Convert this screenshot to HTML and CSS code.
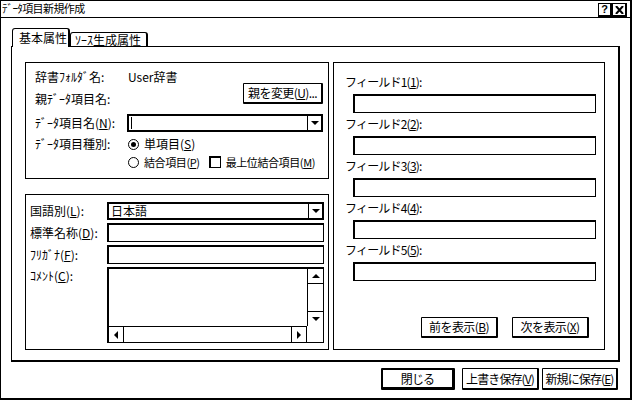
FILE: index.html
```html
<!DOCTYPE html>
<html lang="ja">
<head>
    <meta charset="UTF-8">
    <title>ﾃﾞｰﾀ項目新規作成</title>
    <link rel="stylesheet" href="styles.css">
</head>
<body>
    <div class="window">
        <div class="titlebar">
            <span class="title">ﾃﾞｰﾀ項目新規作成</span>
            <div class="caption-btns">
                <span class="cap-btn">?</span>
                <span class="cap-btn">
                    <svg width="9" height="8" viewBox="0 0 9 8"><path d="M1 0 L8 8 M8 0 L1 8" stroke="#000" stroke-width="2" fill="none"/></svg>
                </span>
            </div>
        </div>

        <div class="body">
            <div class="tabs">
                <div class="tab active">基本属性</div>
                <div class="tab">ｿｰｽ生成属性</div>
            </div>

            <div class="tab-panel">
                <div class="left-col">
                    <!-- 項目 -->
                    <div class="group group-item">
                        <div class="row r1">
                            <span class="label">辞書ﾌｫﾙﾀﾞ名:</span>
                            <span class="value">User辞書</span>
                        </div>
                        <div class="row r2">
                            <span class="label">親ﾃﾞｰﾀ項目名:</span>
                            <button class="btn btn-parent">親を変更(<u>U</u>)...</button>
                        </div>
                        <div class="row r3">
                            <span class="label">ﾃﾞｰﾀ項目名(<u>N</u>):</span>
                            <div class="combo combo-name">
                                <div class="combo-text"><span class="caret"></span></div>
                                <div class="combo-drop"><span class="tri-down"></span></div>
                            </div>
                        </div>
                        <div class="row r4">
                            <span class="label">ﾃﾞｰﾀ項目種別:</span>
                            <span class="radio checked"></span>
                            <span class="opt">単項目(<u>S</u>)</span>
                        </div>
                        <div class="row r5">
                            <span class="label"></span>
                            <span class="radio"></span>
                            <span class="opt">結合項目(<u>P</u>)</span>
                            <span class="check"></span>
                            <span class="opt">最上位結合項目(<u>M</u>)</span>
                        </div>
                    </div>

                    <!-- 国語 -->
                    <div class="group group-lang">
                        <div class="lrow">
                            <span class="label2">国語別(<u>L</u>):</span>
                            <div class="combo combo-lang">
                                <div class="combo-text">日本語</div>
                                <div class="combo-drop"><span class="tri-down"></span></div>
                            </div>
                        </div>
                        <div class="lrow">
                            <span class="label2">標準名称(<u>D</u>):</span>
                            <div class="edit"></div>
                        </div>
                        <div class="lrow">
                            <span class="label2">ﾌﾘｶﾞﾅ(<u>F</u>):</span>
                            <div class="edit"></div>
                        </div>
                        <div class="lrow lrow-memo">
                            <span class="label2">ｺﾒﾝﾄ(<u>C</u>):</span>
                            <div class="memo">
                                <div class="memo-text"></div>
                                <div class="vscroll">
                                    <span class="sb-btn"><span class="tri-up"></span></span>
                                    <span class="sb-track"></span>
                                    <span class="sb-btn sb-end"><span class="tri-down"></span></span>
                                </div>
                                <div class="hscroll">
                                    <span class="sb-btn"><span class="tri-left"></span></span>
                                    <span class="sb-track"></span>
                                    <span class="sb-btn sb-end"><span class="tri-right"></span></span>
                                </div>
                                <div class="sb-corner"></div>
                            </div>
                        </div>
                    </div>
                </div>

                <!-- フィールド -->
                <div class="group group-fields">
                    <div class="field-label">フィールド1(<u>1</u>):</div>
                    <div class="edit field-edit"></div>
                    <div class="field-label">フィールド2(<u>2</u>):</div>
                    <div class="edit field-edit"></div>
                    <div class="field-label">フィールド3(<u>3</u>):</div>
                    <div class="edit field-edit"></div>
                    <div class="field-label">フィールド4(<u>4</u>):</div>
                    <div class="edit field-edit"></div>
                    <div class="field-label">フィールド5(<u>5</u>):</div>
                    <div class="edit field-edit"></div>
                    <div class="page-btns">
                        <button class="btn btn-page">前を表示(<u>B</u>)</button>
                        <button class="btn btn-page">次を表示(<u>X</u>)</button>
                    </div>
                </div>
            </div>

            <div class="footer">
                <button class="btn btn-default btn-close">閉じる</button>
                <button class="btn btn-save">上書き保存(<u>V</u>)</button>
                <button class="btn btn-new">新規に保存(<u>E</u>)</button>
            </div>
        </div>
    </div>
</body>
</html>
```

FILE: styles.css
```css
* {
    box-sizing: border-box;
}
body {
    margin: 0;
    background: #fff;
    color: #000;
    font-family: "Noto Sans CJK JP", "Liberation Sans", sans-serif;
    font-size: 12px;
    line-height: 14px;
    white-space: nowrap;
}
u {
    text-underline-offset: 1px;
}
.window {
    width: 632px;
    height: 400px;
    border: 1px solid #000;
    border-right-width: 2px;
    border-bottom-width: 2px;
    display: flex;
    flex-direction: column;
}

/* titlebar */
.titlebar {
    height: 17px;
    border-bottom: 1px solid #000;
    display: flex;
    align-items: flex-start;
    justify-content: space-between;
}
.title {
    font-size: 11px;
    letter-spacing: -0.6px;
    line-height: 15px;
    padding-left: 1px;
}
.caption-btns {
    display: flex;
    margin-top: 2px;
    margin-right: 3px;
}
.cap-btn {
    width: 14px;
    height: 14px;
    border: 1px solid #000;
    border-right-width: 2px;
    border-bottom-width: 2px;
    font-family: "Liberation Sans", sans-serif;
    font-weight: bold;
    font-size: 11px;
    line-height: 11px;
    display: flex;
    align-items: center;
    justify-content: center;
}
.cap-btn + .cap-btn {
    width: 15px;
}

/* tabs */
.body {
    flex: 1;
    padding: 10px 10px 0 10px;
}
.tabs {
    display: flex;
    align-items: flex-end;
    height: 18px;
    padding-left: 1px;
}
.tab {
    height: 14px;
    width: 78px;
    padding: 0 0 0 4px;
    border: 1px solid #000;
    border-bottom: none;
    border-right-width: 2px;
    border-radius: 3px 3px 0 0;
    line-height: 13px;
    background: #fff;
}
.tab.active {
    height: 19px;
    width: 58px;
    margin-bottom: -1px;
    padding: 2px 0 0 6px;
    position: relative;
    z-index: 1;
}
.tab-panel {
    height: 316px;
    border: 1px solid #000;
    border-right-width: 2px;
    border-bottom-width: 2px;
    padding: 15px 13px 10px 13px;
    display: grid;
    grid-template-columns: 304px 272px;
    gap: 4px;
}
.left-col {
    display: flex;
    flex-direction: column;
    gap: 15px;
}
.group {
    border: 1px solid #000;
}

/* group 1 */
.group-item {
    height: 117px;
    padding: 5px 5px 0 9px;
}
.row {
    display: flex;
    align-items: center;
}
.r1 { height: 18px; }
.r2 { height: 26px; }
.r3 { height: 22px; }
.r4 { height: 20px; }
.r5 { height: 16px; }
.label {
    width: 92px;
    flex-shrink: 0;
}
.value {
    padding-left: 1px;
}
.opt {
    flex-shrink: 0;
}
.r5 .opt {
    font-size: 11px;
    letter-spacing: -0.4px;
}
.btn-parent {
    margin-left: auto;
    align-self: flex-start;
    margin-top: -3px;
    width: 80px;
    height: 21px;
}
.radio {
    flex-shrink: 0;
    width: 11px;
    height: 11px;
    border: 1px solid #000;
    border-radius: 50%;
    margin-left: 1px;
    margin-right: 5px;
    display: flex;
    align-items: center;
    justify-content: center;
}
.radio.checked::after {
    content: "";
    width: 5px;
    height: 5px;
    border-radius: 50%;
    background: #000;
}
.check {
    flex-shrink: 0;
    width: 12px;
    height: 12px;
    border: 1px solid #000;
    border-top-width: 2px;
    border-left-width: 2px;
    margin-left: 9px;
    margin-right: 5px;
}

/* combo / edit */
.combo {
    display: flex;
    border: 2px solid #000;
    height: 18px;
    background: #fff;
}
.combo-name {
    width: 196px;
}
.combo-text {
    flex: 1;
    display: flex;
    align-items: center;
    padding-left: 2px;
    line-height: 14px;
}
.caret {
    width: 1px;
    height: 12px;
    background: #000;
}
.combo-drop {
    width: 14px;
    border-left: 1px solid #000;
    display: flex;
    align-items: center;
    justify-content: center;
}
.tri-down, .tri-up, .tri-left, .tri-right {
    width: 0;
    height: 0;
    border: 4px solid transparent;
}
.tri-down { border-top-color: #000; border-bottom-width: 0; }
.tri-up { border-bottom-color: #000; border-top-width: 0; }
.tri-left { border-right-color: #000; border-left-width: 0; }
.tri-right { border-left-color: #000; border-right-width: 0; }
.edit {
    height: 19px;
    border: 1px solid #000;
    border-top-width: 2px;
    border-left-width: 2px;
    background: #fff;
}

/* group 2 */
.group-lang {
    height: 156px;
    padding: 7px 4px 0 4px;
    display: flex;
    flex-direction: column;
    gap: 3px;
}
.lrow {
    display: flex;
    align-items: center;
}
.lrow > .combo, .lrow > .edit, .lrow > .memo {
    width: 217px;
}
.label2 {
    width: 77px;
    flex-shrink: 0;
}
.lrow-memo {
    align-items: flex-start;
}
.lrow-memo .label2 {
    margin-top: 2px;
}
.memo {
    height: 76px;
    border: 2px solid #000;
    border-right-width: 1px;
    border-bottom-width: 1px;
    display: grid;
    grid-template-columns: 1fr 16px;
    grid-template-rows: 1fr 16px;
}
.vscroll {
    border-left: 1px solid #000;
    display: flex;
    flex-direction: column;
}
.hscroll {
    border-top: 1px solid #000;
    border-right: 1px solid #000;
    display: flex;
}
.sb-btn {
    flex: 0 0 15px;
    display: flex;
    align-items: center;
    justify-content: center;
}
.vscroll .sb-btn { border-bottom: 1px solid #000; }
.vscroll .sb-end { border-bottom: none; border-top: 1px solid #000; }
.hscroll .sb-btn { border-right: 1px solid #000; }
.hscroll .sb-end { border-right: none; border-left: 1px solid #000; }
.sb-track {
    flex: 1;
}

/* right group */
.group-fields {
    height: 288px;
    padding: 11px 15px 11px 11px;
    display: flex;
    flex-direction: column;
}
.field-label {
    line-height: 16px;
    height: 16px;
    letter-spacing: -0.8px;
}
.field-edit {
    width: 243px;
    margin: 4px 0 3px 8px;
}
.page-btns {
    margin-top: auto;
    display: flex;
    justify-content: flex-end;
    gap: 14px;
}
.btn-page {
    width: 77px;
    height: 21px;
}

/* buttons */
.btn {
    font-family: inherit;
    font-size: 12px;
    line-height: 14px;
    letter-spacing: -0.6px;
    color: #000;
    background: #fff;
    border: 1px solid #000;
    border-right-width: 2px;
    border-bottom-width: 2px;
    border-radius: 1px;
    padding: 0;
    white-space: nowrap;
}
.btn-default {
    border-width: 2px 3px 3px 2px;
}
.footer {
    display: flex;
    justify-content: flex-end;
    margin-top: 6px;
    padding-right: 2px;
}
.footer .btn {
    height: 22px;
    letter-spacing: -0.9px;
}
.btn-close { width: 74px; }
.btn-save { width: 77px; margin-left: 7px; }
.btn-new { width: 76px; margin-left: 3px; }
```
